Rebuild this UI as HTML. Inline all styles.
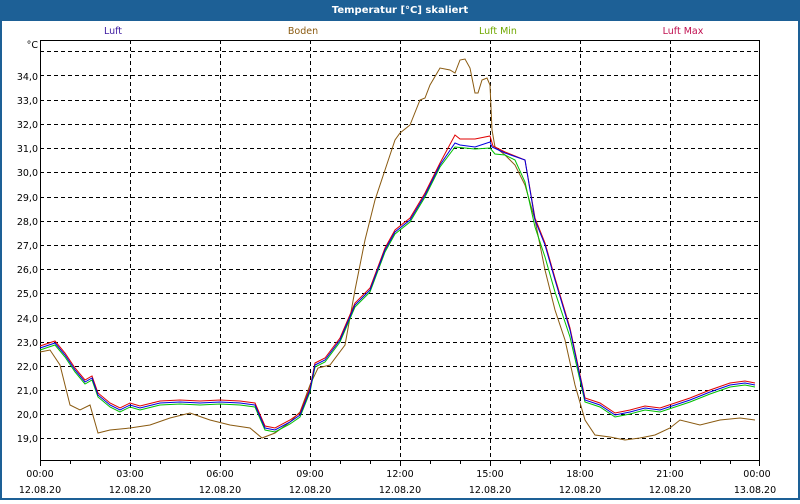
<!DOCTYPE html>
<html><head><meta charset="utf-8"><style>
body{margin:0;width:800px;height:500px;overflow:hidden;background:#fff;font-family:"DejaVu Sans","Liberation Sans",sans-serif}
</style></head><body>
<svg width="800" height="500" xmlns="http://www.w3.org/2000/svg" font-family="DejaVu Sans, Liberation Sans, sans-serif" font-size="9.5">
<rect x="0" y="0" width="800" height="500" fill="#1d6096"/>
<rect x="2" y="21" width="796" height="477" fill="#fff"/>
<text x="400" y="13" fill="#fff" font-weight="bold" text-anchor="middle" font-size="10">Temperatur [°C] skaliert</text>
<text x="113" y="34" fill="#3c1aa0" text-anchor="middle">Luft</text>
<text x="303" y="34" fill="#8a5a10" text-anchor="middle">Boden</text>
<text x="498" y="34" fill="#70a800" text-anchor="middle">Luft Min</text>
<text x="683" y="34" fill="#c01050" text-anchor="middle">Luft Max</text>
<g stroke="#000" stroke-dasharray="4,3" stroke-width="1">
<path d="M40 51.5H760M40 75.5H760M40 100.5H760M40 124.5H760M40 148.5H760M40 172.5H760M40 197.5H760M40 221.5H760M40 245.5H760M40 269.5H760M40 293.5H760M40 318.5H760M40 342.5H760M40 366.5H760M40 390.5H760M40 414.5H760M40 438.5H760"/>
<path d="M130.5 40V460M220.5 40V460M310.5 40V460M400.5 40V460M490.5 40V460M580.5 40V460M670.5 40V460"/>
</g>
<rect x="40.5" y="40.5" width="719" height="420" fill="none" stroke="#000"/>
<path stroke="#000" d="M40.5 460V466M70.5 460V464M100.5 460V464M130.5 460V466M160.5 460V464M190.5 460V464M220.5 460V466M250.5 460V464M280.5 460V464M310.5 460V466M340.5 460V464M370.5 460V464M400.5 460V466M430.5 460V464M460.5 460V464M490.5 460V466M520.5 460V464M550.5 460V464M580.5 460V466M610.5 460V464M640.5 460V464M670.5 460V466M700.5 460V464M730.5 460V464M759.5 460V466"/>
<g fill="#000" text-anchor="end">
<text x="38" y="48">°C</text>
<text x="38" y="80">34,0</text><text x="38" y="104">33,0</text><text x="38" y="128">32,0</text><text x="38" y="152">31,0</text><text x="38" y="176">30,0</text><text x="38" y="201">29,0</text><text x="38" y="225">28,0</text><text x="38" y="249">27,0</text><text x="38" y="273">26,0</text><text x="38" y="297">25,0</text><text x="38" y="322">24,0</text><text x="38" y="346">23,0</text><text x="38" y="370">22,0</text><text x="38" y="394">21,0</text><text x="38" y="418">20,0</text><text x="38" y="442">19,0</text>
</g>
<g fill="#000" text-anchor="middle">
<text x="40" y="477">00:00</text><text x="130" y="477">03:00</text><text x="220" y="477">06:00</text><text x="310" y="477">09:00</text><text x="400" y="477">12:00</text><text x="490" y="477">15:00</text><text x="580" y="477">18:00</text><text x="670" y="477">21:00</text><text x="757" y="477">00:00</text>
<text x="40" y="493">12.08.20</text><text x="130" y="493">12.08.20</text><text x="220" y="493">12.08.20</text><text x="310" y="493">12.08.20</text><text x="400" y="493">12.08.20</text><text x="490" y="493">12.08.20</text><text x="580" y="493">12.08.20</text><text x="670" y="493">12.08.20</text><text x="755" y="493">13.08.20</text>
</g>
<polyline fill="none" stroke="#8a5a10" points="40,352 50,350 60,365 70,405 80,410 90,405 98,433 110,430 130,428 150,425 170,418 190,413 210,420 230,425 250,428 262,438 275,433 290,422 300,412 310,385 318,368 330,365 345,345 355,290 365,240 375,200 385,170 395,140 400,133 410,125 420,100 425,98 430,85 440,68 450,70 455,73 460,60 465,59 470,68 475,93 478,93 482,80 487,78 490,85 492,130 495,147 505,155 515,165 525,185 535,220 545,270 555,310 565,340 575,385 585,420 595,435 610,437 625,440 640,438 655,435 670,428 680,420 700,425 720,420 740,418 755,420"/>
<polyline fill="none" stroke="#00c000" transform="translate(0,2)" points="40,348 55,343 65,355 75,370 85,382 92,378 98,395 110,405 120,410 130,405 140,408 160,403 180,402 200,403 220,402 240,403 255,405 265,428 275,430 290,422 300,415 310,390 315,365 325,360 340,340 355,305 370,290 385,250 395,232 410,220 425,195 440,165 455,145 475,147 490,146 495,152 505,153 515,158 525,180 535,225 545,255 555,290 570,335 585,400 600,405 615,415 630,412 645,408 660,410 675,405 690,400 710,392 730,385 745,383 755,385"/>
<polyline fill="none" stroke="#e00000" transform="translate(0,-2)" points="40,348 55,343 65,355 75,370 85,382 92,378 98,395 110,405 120,410 130,405 140,408 160,403 180,402 200,403 220,402 240,403 255,405 265,428 275,430 290,422 300,415 310,390 315,365 325,360 340,340 355,305 370,290 385,250 395,232 410,220 425,195 440,165 455,137 460,141 475,141 490,138 493,148 505,154 525,162 535,220 545,245 555,280 570,330 585,400 600,405 615,415 630,412 645,408 660,410 675,405 690,400 710,392 730,385 745,383 755,385"/>
<polyline fill="none" stroke="#0000e0" points="40,348 55,343 65,355 75,370 85,382 92,378 98,395 110,405 120,410 130,405 140,408 160,403 180,402 200,403 220,402 240,403 255,405 265,428 275,430 290,422 300,415 310,390 315,365 325,360 340,340 355,305 370,290 385,250 395,232 410,220 425,195 440,165 455,143 460,145 475,147 490,142 492,147 505,153 525,160 535,220 545,245 555,280 570,330 585,400 600,405 615,415 630,412 645,408 660,410 675,405 690,400 710,392 730,385 745,383 755,385"/>
</svg>
</body></html>
